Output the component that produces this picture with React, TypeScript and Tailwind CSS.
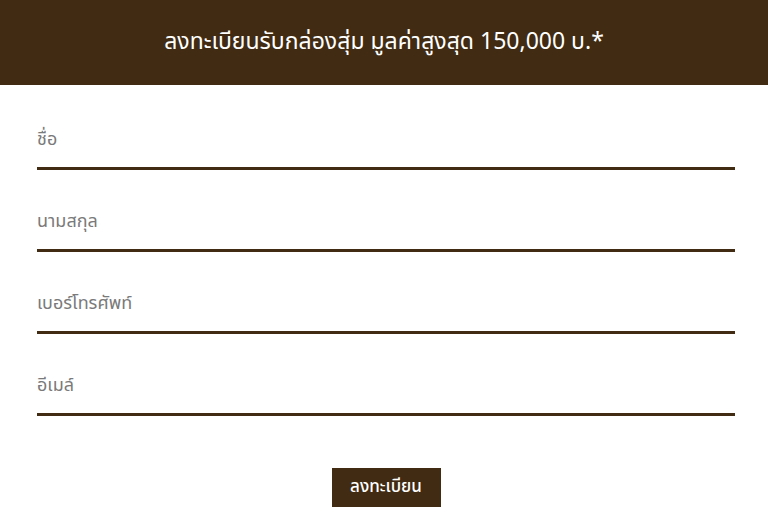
const fields = ['ชื่อ', 'นามสกุล', 'เบอร์โทรศัพท์', 'อีเมล์'];

const App = () => {
  return (
    <div className="min-h-[527px] bg-white font-['Noto_Sans_Thai','Noto_Sans','Liberation_Sans',sans-serif]">
      <div className="flex h-[85px] items-center justify-center bg-[#412b13]">
        <h1 className="text-[23px] text-white">ลงทะเบียนรับกล่องสุ่ม มูลค่าสูงสุด 150,000 บ.*</h1>
      </div>
      <form className="pl-[37px] pr-[33px] pt-[3px]">
        {fields.map((label) => (
          <div
            key={label}
            className="flex h-[82px] flex-col justify-end border-b-[3px] border-[#412b13] pb-[13px]"
          >
            <label className="text-[18px] leading-7 text-[#7a7a7a]">{label}</label>
          </div>
        ))}
        <div className="flex justify-center pt-[52px]">
          <button
            type="button"
            className="h-[39px] w-[109px] bg-[#412b13] text-[17px] font-medium text-white"
          >
            ลงทะเบียน
          </button>
        </div>
      </form>
    </div>
  );
};

export default App;
